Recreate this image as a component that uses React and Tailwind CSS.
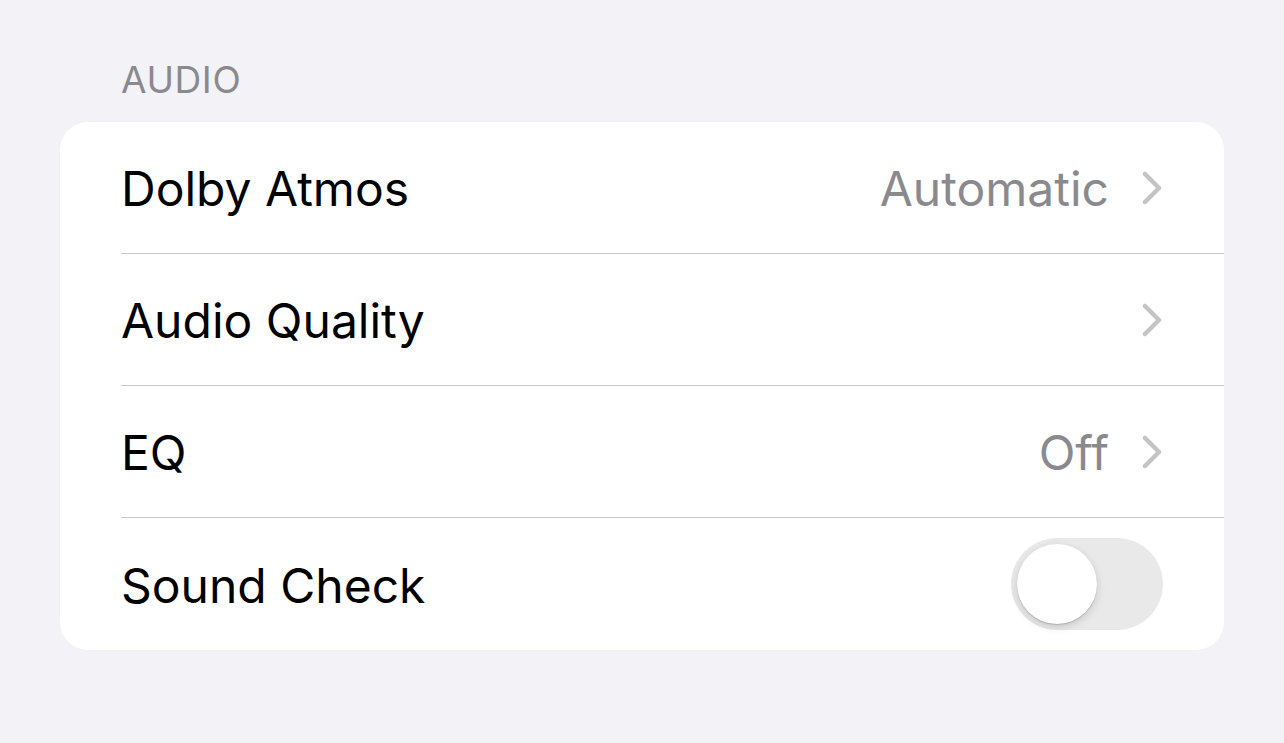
import { useState } from 'react';

const Chevron = () => (
  <svg width="22" height="34" viewBox="0 0 22 34" fill="none" className="shrink-0">
    <path d="M4 3 L18 17 L4 31" stroke="#c4c4c7" strokeWidth="4.5" strokeLinecap="round" strokeLinejoin="round" />
  </svg>
);

const Toggle = ({ on, onChange }) => (
  <button
    onClick={() => onChange(!on)}
    className={`relative w-[152px] h-[92px] rounded-full transition-colors ${on ? 'bg-[#34c759]' : 'bg-[#e9e9ea]'}`}
  >
    <span
      className={`absolute top-[6px] w-[80px] h-[80px] rounded-full bg-white shadow-[0_3px_8px_rgba(0,0,0,0.15),0_1px_1px_rgba(0,0,0,0.16)] transition-all ${on ? 'left-[66px]' : 'left-[6px]'}`}
    />
  </button>
);

const Row = ({ label, value, chevron, last, children }) => (
  <div className="pl-[61px]">
    <div className={`h-[132px] flex items-center justify-between pr-[61px] ${last ? '' : 'border-b-[1.5px] border-[#c8c8cc]'}`}>
      <span className="text-[48px] text-black pt-[3px]">{label}</span>
      <div className="flex items-center gap-[32px]">
        {value && <span className="text-[48px] text-[#8a8a8e] pt-[3px]">{value}</span>}
        {chevron && <Chevron />}
        {children}
      </div>
    </div>
  </div>
);

export default function App() {
  const [soundCheck, setSoundCheck] = useState(false);

  return (
    <div className="min-h-[743px] bg-[#f2f2f7] px-[60px] pt-[54px]" style={{ fontFamily: 'Inter, "Noto Sans", sans-serif' }}>
      <div className="pl-[61px] text-[37px] leading-[52px] tracking-[0.6px] text-[#8a8a8e] mb-[16px]">AUDIO</div>
      <div className="bg-white rounded-[28px] overflow-hidden">
        <Row label="Dolby Atmos" value="Automatic" chevron />
        <Row label="Audio Quality" chevron />
        <Row label="EQ" value="Off" chevron />
        <Row label="Sound Check" last>
          <Toggle on={soundCheck} onChange={setSoundCheck} />
        </Row>
      </div>
    </div>
  );
}
